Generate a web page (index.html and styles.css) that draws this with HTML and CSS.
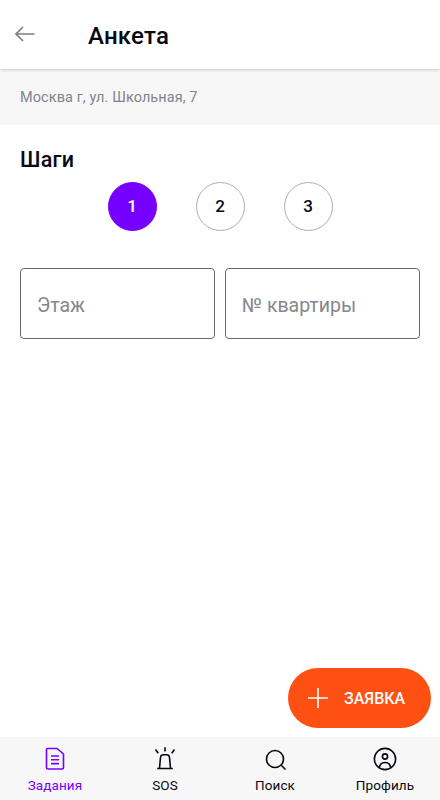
FILE: index.html
```html
<!DOCTYPE html>
<html lang="ru">
<head>
  <meta charset="UTF-8">
  <meta name="viewport" content="width=device-width, initial-scale=1.0">
  <title>Анкета</title>
  <link rel="stylesheet" href="styles.css">
</head>
<body>
  <header class="header">
    <a class="back" href="#">
      <svg width="20" height="16" viewBox="0 0 20 16"><path d="M19.500 8H1M8 1L1 8l7 7"/></svg>
    </a>
    <h1>Анкета</h1>
  </header>
  <div class="address">Москва г, ул. Школьная, 7</div>

  <main class="content">
    <h2>Шаги</h2>
    <div class="steps">
      <div class="step active">1</div>
      <div class="step">2</div>
      <div class="step">3</div>
    </div>
    <div class="fields">
      <input type="text" placeholder="Этаж">
      <input type="text" placeholder="№ квартиры">
    </div>
    <button class="request">
      <svg width="20" height="20" viewBox="0 0 20 20"><path d="M10 0v20M0 10h20"/></svg>
      <span>ЗАЯВКА</span>
    </button>
  </main>

  <nav class="tabs">
    <a class="tab active" href="#">
      <svg width="24" height="24" viewBox="0 0 24 24"><path d="M4.500 1.500h9.500L20.500 7v13.500a1.500 1.500 0 0 1-1.500 1.500H5a1.500 1.500 0 0 1-1.500-1.500V2.500a1 1 0 0 1 1-1zM8 9h8M8 12.800h8M8 16.600h8"/></svg>
      <span>Задания</span>
    </a>
    <a class="tab" href="#">
      <svg width="24" height="24" viewBox="0 0 24 24"><path d="M4.200 21.500h15.600M6.500 21.200l1-10.700a3 3 0 0 1 3-2.700h3a3 3 0 0 1 3 2.700l1 10.700M12 .2v4.200M2.500 2.500l2.800 3.700M21.500 2.500l-2.800 3.700"/></svg>
      <span>SOS</span>
    </a>
    <a class="tab" href="#">
      <svg width="24" height="24" viewBox="0 0 24 24"><circle cx="12" cy="12" r="8.500"/><path d="M18 18l4.500 4.500"/></svg>
      <span>Поиск</span>
    </a>
    <a class="tab" href="#">
      <svg width="24" height="24" viewBox="0 0 24 24"><circle cx="12" cy="12" r="10.600"/><circle cx="12" cy="9.500" r="2.600"/><path d="M6.300 20.500c.7-3.400 2.900-5 5.700-5s5 1.600 5.700 5"/></svg>
      <span>Профиль</span>
    </a>
  </nav>
</body>
</html>
```

FILE: styles.css
```css
* {
  box-sizing: border-box;
}
body {
  margin: 0;
  height: 100vh;
  display: flex;
  flex-direction: column;
  font-family: Roboto, sans-serif;
  background: #fff;
  color: #080812;
}
svg {
  display: block;
  fill: none;
  stroke: currentColor;
  stroke-width: 1.6;
}
a {
  color: inherit;
  text-decoration: none;
}
h1, h2 {
  margin: 0;
  font-weight: 500;
}
.header {
  height: 69px;
  flex-shrink: 0;
  display: flex;
  align-items: center;
  gap: 53px;
  padding: 2px 15px 0;
  background: #fff;
  box-shadow: 0 1px 3px rgba(0, 0, 0, 0.18);
  z-index: 1;
}
.back {
  margin-top: -3px;
  color: #7b7e8b;
}
h1 {
  font-size: 24px;
  line-height: 30px;
  letter-spacing: 0.2px;
}
.address {
  height: 56px;
  flex-shrink: 0;
  padding: 0 20px;
  font-size: 14.5px;
  line-height: 57px;
  letter-spacing: 0.08px;
  color: #82848f;
  background: #f7f7f7;
}
.content {
  flex: 1;
  display: flex;
  flex-direction: column;
  padding: 22px 20px 9px;
}
h2 {
  font-size: 21.5px;
  line-height: 26px;
  letter-spacing: 0.2px;
}
.steps {
  display: flex;
  justify-content: center;
  gap: 39px;
  margin-top: 9px;
}
.step {
  width: 49px;
  height: 49px;
  border: 1px solid #adadb4;
  border-radius: 50%;
  font-size: 17px;
  font-weight: 500;
  line-height: 47px;
  text-align: center;
}
.step.active {
  border-color: #7600ff;
  background: #7600ff;
  color: #fff;
}
.fields {
  display: grid;
  grid-template-columns: 1fr 1fr;
  gap: 10px;
  margin-top: 37px;
}
input {
  width: 100%;
  height: 71px;
  padding: 3px 16px 0;
  border: 1px solid #666978;
  border-radius: 4px;
  outline: none;
  font: 19.5px Roboto, sans-serif;
}
input::placeholder {
  color: #85878f;
}
.request {
  align-self: flex-end;
  display: flex;
  align-items: center;
  gap: 16px;
  width: 143px;
  height: 60px;
  margin: auto -11px 0 0;
  padding: 0 20px;
  border: none;
  border-radius: 30px;
  background: #ff5013;
  color: #fff;
  font: 500 16px Roboto, sans-serif;
}
.tabs {
  height: 63px;
  flex-shrink: 0;
  display: flex;
  background: #f7f7f7;
}
.tab {
  flex: 1;
  display: flex;
  flex-direction: column;
  align-items: center;
  gap: 6px;
  padding-top: 10px;
  font-size: 13.5px;
  line-height: 16px;
  letter-spacing: 0.1px;
}
.tab.active {
  color: #7600ff;
}
```
